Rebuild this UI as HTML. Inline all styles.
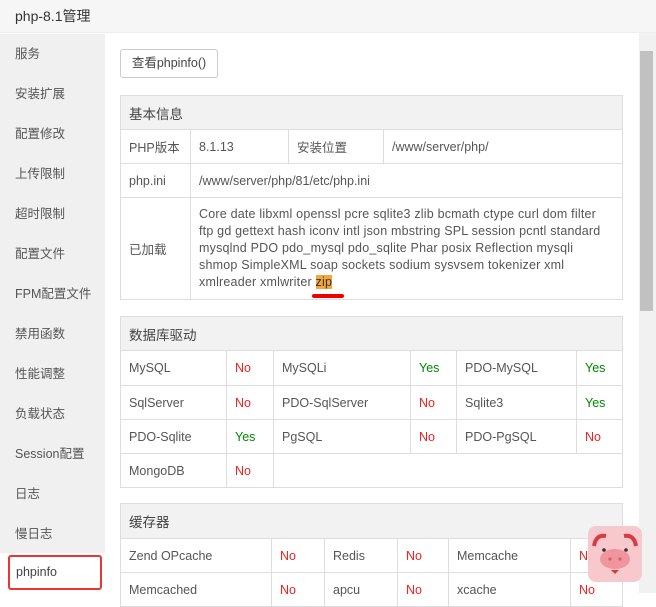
<!DOCTYPE html><html><head><meta charset="utf-8"><style>
*{margin:0;padding:0;box-sizing:border-box}
body{width:656px;height:593px;overflow:hidden;background:#fff;font-family:"Liberation Sans","Noto Sans CJK SC",sans-serif;font-size:12.5px;color:#555;position:relative}
.hd{position:absolute;left:0;top:0;width:656px;height:33px;background:#f6f6f6;border-bottom:1px solid #eee;font-size:14px;color:#333;padding:6px 0 0 15px}
.sb{position:absolute;left:0;top:34px;width:105px;height:519px;background:#f0f0f0}
.sb div{height:40px;line-height:40px;padding-left:15px;color:#555;font-size:12.5px}
.act{position:absolute;left:8px;top:555px;width:94px;height:35px;border:2px solid #e33;border-radius:3px;line-height:31px;padding-left:6px;color:#444}
.btn{position:absolute;left:120px;top:49px;width:98px;height:29px;border:1px solid #ccc;border-radius:3px;line-height:27px;text-align:center;color:#444}
table{position:absolute;left:120px;width:503px;border-collapse:collapse;table-layout:fixed}
td,th{border:1px solid #ddd;padding:0 8px;text-align:left;font-weight:normal;vertical-align:middle}
th{background:#f2f2f2;color:#444;font-size:13.5px}
.r{color:#e22}.g{color:#080}
.zip{background:#f5a63b;color:#333}
.sc{position:absolute;left:639px;top:33px;width:17px;height:560px;background:#f1f1f1}
.th{position:absolute;left:640px;top:51px;width:13px;height:260px;background:#c1c1c1}
</style></head><body>
<div class="hd">php-8.1管理</div>
<div class="sb"><div>服务</div><div>安装扩展</div><div>配置修改</div><div>上传限制</div><div>超时限制</div><div>配置文件</div><div>FPM配置文件</div><div>禁用函数</div><div>性能调整</div><div>负载状态</div><div>Session配置</div><div>日志</div><div>慢日志</div></div>
<div class="act">phpinfo</div>
<div class="btn">查看phpinfo()</div>
<table style="top:95px"><colgroup><col style="width:70px"><col style="width:98px"><col style="width:95px"><col></colgroup>
<tr style="height:34px"><th colspan="4">基本信息</th></tr>
<tr style="height:34px"><td>PHP版本</td><td>8.1.13</td><td>安装位置</td><td>/www/server/php/</td></tr>
<tr style="height:34px"><td>php.ini</td><td colspan="3">/www/server/php/81/etc/php.ini</td></tr>
<tr style="height:102px"><td>已加载</td><td colspan="3" style="line-height:17px;white-space:nowrap;letter-spacing:0.2px">Core date libxml openssl pcre sqlite3 zlib bcmath ctype curl dom filter<br>ftp gd gettext hash iconv intl json mbstring SPL session pcntl standard<br>mysqlnd PDO pdo_mysql pdo_sqlite Phar posix Reflection mysqli<br>shmop SimpleXML soap sockets sodium sysvsem tokenizer xml<br>xmlreader xmlwriter <span class="zip">zip</span></td></tr>
</table>
<div style="position:absolute;left:312px;top:294px;width:32px;height:4px;background:#e00;border-radius:2px"></div>
<table style="top:316px"><colgroup><col style="width:106px"><col style="width:47px"><col style="width:137px"><col style="width:46px"><col style="width:120px"><col></colgroup>
<tr style="height:34px"><th colspan="6">数据库驱动</th></tr>
<tr style="height:35px"><td>MySQL</td><td class="r">No</td><td>MySQLi</td><td class="g">Yes</td><td>PDO-MySQL</td><td class="g">Yes</td></tr>
<tr style="height:34px"><td>SqlServer</td><td class="r">No</td><td>PDO-SqlServer</td><td class="r">No</td><td>Sqlite3</td><td class="g">Yes</td></tr>
<tr style="height:34px"><td>PDO-Sqlite</td><td class="g">Yes</td><td>PgSQL</td><td class="r">No</td><td>PDO-PgSQL</td><td class="r">No</td></tr>
<tr style="height:34px"><td>MongoDB</td><td class="r">No</td><td colspan="4"></td></tr>
</table>
<table style="top:503px"><colgroup><col style="width:151px"><col style="width:53px"><col style="width:73px"><col style="width:51px"><col style="width:122px"><col></colgroup>
<tr style="height:35px"><th colspan="6">缓存器</th></tr>
<tr style="height:34px"><td>Zend OPcache</td><td class="r">No</td><td>Redis</td><td class="r">No</td><td>Memcache</td><td class="r">No</td></tr>
<tr style="height:34px"><td>Memcached</td><td class="r">No</td><td>apcu</td><td class="r">No</td><td>xcache</td><td class="r">No</td></tr>
</table>
<div class="sc"></div><div class="th"></div>
<svg style="position:absolute;left:588px;top:526px" width="54" height="56" viewBox="0 0 54 56">
<rect x="0" y="0" width="54" height="56" rx="8" fill="#f7c9cc"/>
<path d="M6 20 Q8 8 18 10" stroke="#d83a44" stroke-width="4" fill="none"/>
<path d="M48 20 Q46 8 36 10" stroke="#d83a44" stroke-width="4" fill="none"/>
<circle cx="16" cy="24" r="1.8" fill="#333"/><circle cx="38" cy="24" r="1.8" fill="#333"/>
<ellipse cx="27" cy="33" rx="15" ry="10" fill="#f0959d"/>
<circle cx="22" cy="33" r="1.6" fill="#d0606a"/><circle cx="32" cy="33" r="1.6" fill="#d0606a"/>
<path d="M23 44 L31 44 L27 48Z" fill="#d83a44"/>
</svg>
</body></html>
